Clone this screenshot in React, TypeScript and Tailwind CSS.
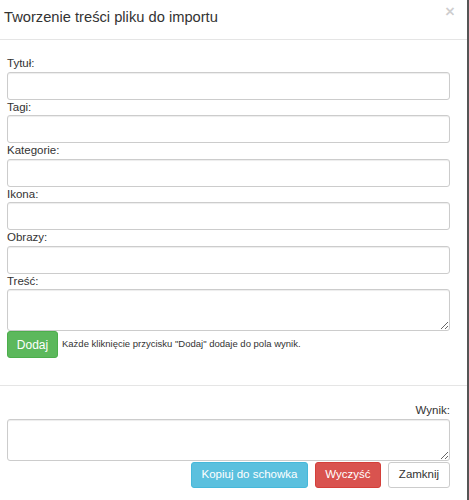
import React from "react";

const labelCls = "block text-[11.5px] leading-[15.5px] text-[#333]";
const inputCls =
  "block w-full h-[28px] rounded-[3px] border border-[#ccc] bg-white shadow-[inset_0_1px_1px_rgba(0,0,0,0.075)] outline-none";
const areaCls =
  "block w-full rounded-[3px] border border-[#ccc] bg-white shadow-[inset_0_1px_1px_rgba(0,0,0,0.075)] outline-none";

function Field({ label }: { label: string }) {
  return (
    <div>
      <label className={labelCls}>{label}</label>
      <input type="text" className={inputCls} />
    </div>
  );
}

export default function App() {
  return (
    <div className="flex h-[500px] w-[469px] overflow-hidden bg-[#555] font-['Liberation_Sans',Arial,sans-serif]">
      <div className="flex h-[500px] w-[467px] flex-col bg-white">
        {/* header */}
        <div className="flex h-[40px] items-start justify-between border-b border-[#e5e5e5] pl-[4px] pr-[12px]">
          <h4 className="pt-[7px] text-[14.7px] leading-[20px] text-[#333]">Tworzenie treści pliku do importu</h4>
          <button className="pt-[2px] text-[17px] font-bold leading-[20px] text-black/20">×</button>
        </div>

        {/* body */}
        <div className="pl-[7px] pr-[17px] pt-[16px] pb-[27px]">
          <Field label="Tytuł:" />
          <Field label="Tagi:" />
          <Field label="Kategorie:" />
          <Field label="Ikona:" />
          <Field label="Obrazy:" />
          <div>
            <label className={labelCls}>Treść:</label>
            <textarea className={`${areaCls} h-[42px]`} />
          </div>
          <div className="flex items-center">
            <button className="h-[27px] w-[51px] rounded-[3px] border border-[#4cae4c] bg-[#5cb85c] text-[12px] text-white">
              Dodaj
            </button>
            <span className="ml-[4px] text-[9.5px] text-[#333]">
              Każde kliknięcie przycisku "Dodaj" dodaje do pola wynik.
            </span>
          </div>
        </div>

        {/* footer */}
        <div className="border-t border-[#e5e5e5] pl-[7px] pr-[17px] pt-[17px]">
          <label className={`${labelCls} text-right`}>Wynik:</label>
          <textarea className={`${areaCls} h-[42px]`} />
          <div className="mt-[1px] flex justify-end gap-[7px]">
            <button className="h-[26px] w-[117px] rounded-[3px] border border-[#46b8da] bg-[#5bc0de] text-[11.5px] text-white">
              Kopiuj do schowka
            </button>
            <button className="h-[26px] w-[66px] rounded-[3px] border border-[#d43f3a] bg-[#d9534f] text-[11.5px] text-white">
              Wyczyść
            </button>
            <button className="h-[26px] w-[62px] rounded-[3px] border border-[#ccc] bg-white text-[11.5px] text-[#333]">
              Zamknij
            </button>
          </div>
        </div>
      </div>
    </div>
  );
}
